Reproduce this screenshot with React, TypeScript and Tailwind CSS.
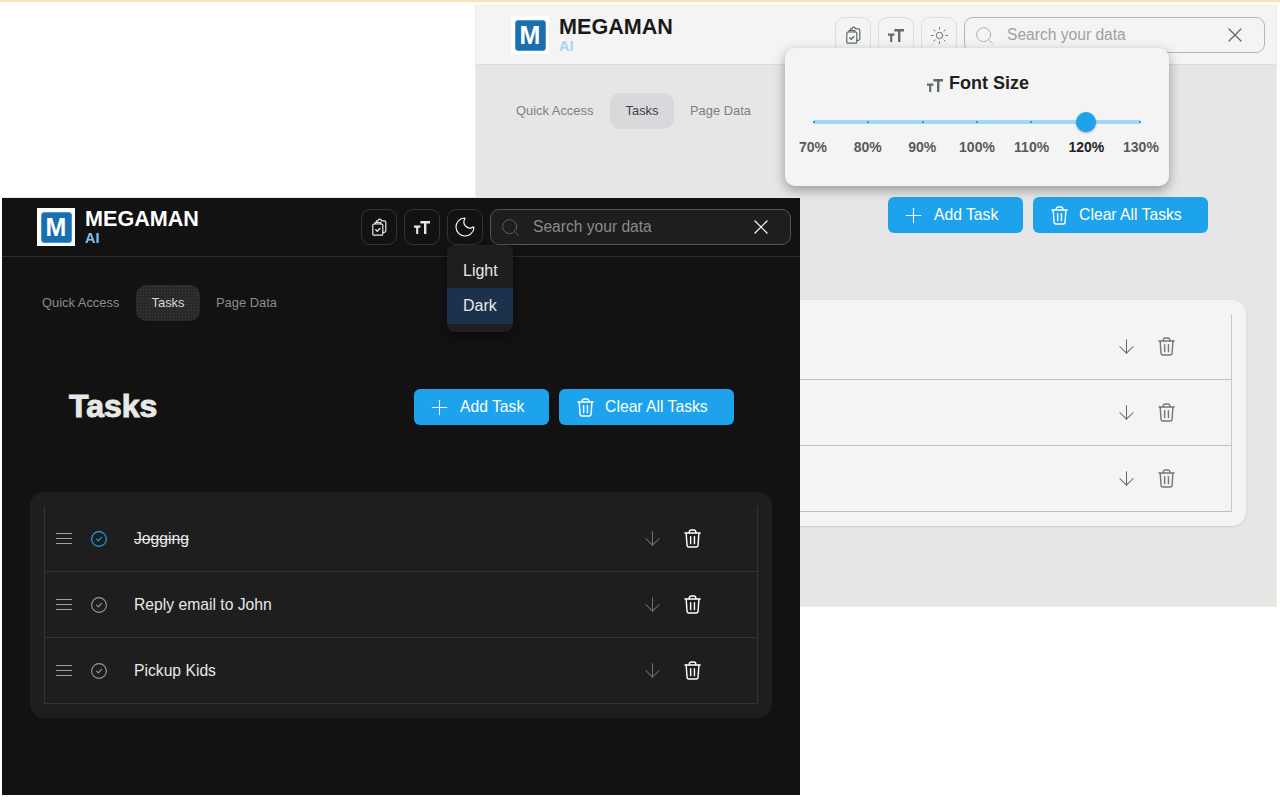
import React from "react";
import { ArrowDown, Moon, Plus, Search, Sun, X } from "lucide-react";

type Theme = {
  page: string; head: string; title: string; ai: string; iconBtn: string; iconInk: string; themeInk: string;
  search: string; searchIcon: string; placeholder: string; xInk: string; tab: string; tabActive: string;
  heading: string; card: string; list: string; row: string; handle: string; circle: string; task: string;
  arrow: string; trash: string;
};

const dark: Theme = {
  page: "bg-[#121212]",
  head: "border-[#2e2e2e] bg-[#121212]",
  title: "text-white",
  ai: "text-[#7cc4f5]",
  iconBtn: "border-[#333333]",
  iconInk: "text-[#e8e8e8]",
  themeInk: "text-white",
  search: "border-[#555555] bg-[#1e1e1e]",
  searchIcon: "text-[#666666]",
  placeholder: "text-[#8a8a8a]",
  xInk: "text-white",
  tab: "text-[#8c8c8c]",
  tabActive: "bg-[#292929] bg-[radial-gradient(#3d3d3d_0.6px,transparent_0.7px)] bg-[length:3px_3px] text-[#d8d8d8]",
  heading: "text-[#e8e8e8]",
  card: "bg-[#1e1e1e]",
  list: "border-[#333333]",
  row: "border-[#333333]",
  handle: "bg-[#a0a0a0]",
  circle: "text-[#9a9a9a]",
  task: "text-[#e8e8e8]",
  arrow: "text-[#6b7671]",
  trash: "text-white",
};

const light: Theme = {
  page: "bg-[#e6e6e6]",
  head: "border-[#dcdcdc] bg-[#f4f4f4]",
  title: "text-[#1a1a1a]",
  ai: "text-[#9fd8f4]",
  iconBtn: "border-[#dedede]",
  iconInk: "text-[#5f6b66]",
  themeInk: "text-[#5f6b66]",
  search: "border-[#b4b4b4] bg-[#f4f4f4]",
  searchIcon: "text-[#a6a6a6]",
  placeholder: "text-[#a0a0a0]",
  xInk: "text-[#666666]",
  tab: "text-[#808080]",
  tabActive: "bg-[#d9d9db] text-[#3a3f4a]",
  heading: "text-[#1a1a1a]",
  card: "bg-[#f4f4f4] shadow-[0_1px_2px_rgba(0,0,0,0.12)]",
  list: "border-[#c8c8c8]",
  row: "border-[#c0c0c0]",
  handle: "bg-[#777777]",
  circle: "text-[#777777]",
  task: "text-[#1a1a1a]",
  arrow: "text-[#5f6b66]",
  trash: "text-[#777777]",
};

const FontSizeIcon = ({ className }: { className?: string }) => (
  <svg viewBox="0 0 16 14" width="16" height="14" fill="none" stroke="currentColor" strokeWidth="2.4" className={className}>
    <path d="M6.4 2.2H16M11.2 2.2V14" />
    <path d="M0 6.6h6.4M3.2 6.6V14" strokeWidth="2.1" />
  </svg>
);

const TaskCopyIcon = ({ className }: { className?: string }) => (
  <svg viewBox="0 0 15 18" width="15" height="18" fill="none" stroke="currentColor" strokeWidth="1.2" strokeLinejoin="round" strokeLinecap="round" className={className}>
    <rect x="0.8" y="6" width="10" height="11.2" rx="1" />
    <path d="M3 6V4.6h1.4M4.4 4.6V2.8h1.8a1.6 1.6 0 0 1 3.2 0h2.8a1.6 1.6 0 0 1 1.6 1.6v8.4a1.6 1.6 0 0 1-1.6 1.6h-1.4" />
    <path d="M8.8 6V4.6H5" />
    <path d="M3.8 11.8l1.5 1.4 2.6-2.8" strokeWidth="1.4" />
  </svg>
);

const TrashIcon = ({ className, size = 20 }: { className?: string; size?: number }) => (
  <svg viewBox="0 0 18 20" width={size * 0.9} height={size} fill="none" stroke="currentColor" strokeWidth="1.5" strokeLinejoin="round" strokeLinecap="round" className={className}>
    <path d="M1 4.2h16" />
    <path d="M5.6 4V3a2 2 0 0 1 2-2h2.8a2 2 0 0 1 2 2v1" />
    <path d="M2.3 4.4l.9 12.8A2 2 0 0 0 5.2 19h7.6a2 2 0 0 0 2-1.8l.9-12.8" />
    <path d="M7 8v7.4M11 8v7.4" />
  </svg>
);

const CheckCircle = ({ className }: { className?: string }) => (
  <svg viewBox="0 0 16 16" width="16" height="16" fill="none" stroke="currentColor" strokeWidth="1.1" strokeLinecap="round" strokeLinejoin="round" className={className}>
    <circle cx="8" cy="8" r="7.4" />
    <path d="M5.6 8.2l1.7 1.7 3.2-3.6" />
  </svg>
);

const Logo = () => (
  <div className="flex h-[38px] w-[38px] shrink-0 items-center justify-center bg-white">
    <div className="flex h-[31px] w-[31px] items-center justify-center rounded-[3px] border-[1.5px] border-[#4f97c9] bg-[#1b6fae] text-[25px] font-bold leading-none text-white">M</div>
  </div>
);

function TaskRow({ t, label, done }: { t: Theme; label?: string; done?: boolean }) {
  return (
    <div className={`flex h-[66px] items-center border-b ${t.row}`}>
      <div className="ml-[11px] flex w-[16px] flex-col gap-[4px]">
        <span className={`h-px w-full ${t.handle}`} />
        <span className={`h-px w-full ${t.handle}`} />
        <span className={`h-px w-full ${t.handle}`} />
      </div>
      <CheckCircle className={`ml-[19px] ${done ? "text-[#1da3ec]" : t.circle}`} />
      <span className={`ml-[27px] flex-1 text-[15.7px] ${t.task} ${done ? "line-through" : ""}`}>{label}</span>
      <ArrowDown size={23} strokeWidth={1.05} className={`mr-[20px] ${t.arrow}`} />
      <TrashIcon className={`mr-[56px] ${t.trash}`} size={19} />
    </div>
  );
}

function Screen({ t, isDark }: { t: Theme; isDark: boolean }) {
  return (
    <div className={`flex h-[600px] w-[800px] flex-col ${t.page}`}>
      <header className={`flex h-[59px] shrink-0 items-center border-b pl-[35px] pr-[11px] ${t.head}`}>
        <Logo />
        <div className="ml-[10px] -mt-[2px] flex flex-col">
          <span className={`text-[21.6px] font-bold leading-[24px] ${t.title}`}>MEGAMAN</span>
          <span className={`text-[14.4px] font-bold leading-[15px] ${t.ai}`}>AI</span>
        </div>
        <div className="ml-auto flex items-center gap-[7px]">
          <button className={`flex h-9 w-9 items-center justify-center rounded-[9px] border ${t.iconBtn} ${t.iconInk}`}><TaskCopyIcon /></button>
          <button className={`flex h-9 w-9 items-center justify-center rounded-[9px] border ${t.iconBtn} ${t.iconInk}`}><FontSizeIcon /></button>
          <button className={`flex h-9 w-9 items-center justify-center rounded-[9px] border ${t.iconBtn} ${t.themeInk}`}>
            {isDark ? <Moon size={24} strokeWidth={1.1} /> : <Sun size={19} strokeWidth={1.2} />}
          </button>
          <div className={`flex h-9 w-[301px] items-center rounded-[9px] border pl-[9px] pr-[17px] ${t.search}`}>
            <Search size={21} strokeWidth={1} className={t.searchIcon} />
            <span className={`ml-[12px] flex-1 text-[15.6px] ${t.placeholder}`}>Search your data</span>
            <X size={24} strokeWidth={1.2} className={t.xInk} />
          </div>
        </div>
      </header>

      <nav className="mt-[28px] flex h-9 pl-6 text-[12.9px]">
        <span className={`flex w-[110px] items-center pl-4 ${t.tab}`}>Quick Access</span>
        <span className={`flex w-[64px] items-center justify-center rounded-[10px] ${t.tabActive}`}>Tasks</span>
        <span className={`flex items-center px-4 ${t.tab}`}>Page Data</span>
      </nav>

      <div className="mt-[68px] flex h-9 items-center justify-between pl-[67px] pr-[68px]">
        {isDark ? (
          <h1 className={`-mt-[3px] text-[32px] font-bold [-webkit-text-stroke:1px_currentColor] ${t.heading}`}>Tasks</h1>
        ) : (
          <span />
        )}
        <div className="flex gap-[10px] text-[15.7px] text-white">
          <button className="flex h-9 w-[135px] items-center rounded-[6px] bg-[#1da3ec] pl-[13px]">
            <Plus size={25} strokeWidth={1} />
            <span className="ml-[8px]">Add Task</span>
          </button>
          <button className="flex h-9 w-[175px] items-center rounded-[6px] bg-[#1da3ec] pl-[18px]">
            <TrashIcon size={19} />
            <span className="ml-[11px]">Clear All Tasks</span>
          </button>
        </div>
      </div>

      <section className={`ml-[28px] mt-[67px] w-[742px] rounded-[14px] p-[14px] ${t.card}`}>
        <div className={`border-x ${t.list}`}>
          <TaskRow t={t} label={isDark ? "Jogging" : undefined} done />
          <TaskRow t={t} label={isDark ? "Reply email to John" : undefined} />
          <TaskRow t={t} label={isDark ? "Pickup Kids" : undefined} />
        </div>
      </section>
    </div>
  );
}

const levels = ["70%", "80%", "90%", "100%", "110%", "120%", "130%"];

export default function App() {
  return (
    <div className="relative h-[800px] w-[1280px] overflow-hidden bg-white font-['Liberation_Sans',Arial,sans-serif]">
      <div className="h-[2px] w-full bg-[#fbe3bd]" />

      <div className="absolute left-[475px] top-[5px] border border-[#f7e8d8]">
        <Screen t={light} isDark={false} />
        <div className="absolute left-[309px] top-[42px] h-[138px] w-[384px] rounded-[10px] bg-[#f4f4f4] shadow-[0_4px_12px_rgba(0,0,0,0.35)]">
          <div className="mt-[24px] flex items-center justify-center gap-[6px] text-[18px] font-bold leading-[22px] text-[#1f1f1f]">
            <FontSizeIcon className="ml-[2px] mt-[3px] text-[#5f6b66]" />
            <span>Font Size</span>
          </div>
          <div className="relative mx-[28px] mt-[18px] flex h-[20px] items-center justify-between rounded-full">
            <div className="absolute inset-x-0 top-[8px] h-[4px] rounded-full bg-[#9fd8f4]" />
            {levels.map((l) => (
              <span key={l} className="relative h-[2px] w-[2px] bg-[#1da3ec]" />
            ))}
            <span className="absolute left-[263px] top-0 h-5 w-5 rounded-full bg-[#1da3ec] shadow-[0_1px_2px_rgba(0,0,0,0.35)]" />
          </div>
          <div className="mx-[28px] mt-[5px] flex justify-between text-[14px] font-bold leading-[20px] text-[#5a5a5a]">
            {levels.map((l) => (
              <span key={l} className={`flex w-0 justify-center ${l === "120%" ? "text-[#222222]" : ""}`}>{l}</span>
            ))}
          </div>
        </div>
      </div>

      <div className="absolute left-[2px] top-[197px] h-[598px] w-[798px] overflow-hidden border-t border-[#f0e4d6]">
        <Screen t={dark} isDark />
        <div className="absolute left-[445px] top-[47px] w-[66px] rounded-[8px] bg-[#1e1e1e] pb-[8px] pt-[7px] text-[16px] text-[#e8e8e8] shadow-[0_4px_10px_rgba(0,0,0,0.4)]">
          <div className="flex h-9 items-center pl-4 pt-[2px]">Light</div>
          <div className="flex h-9 items-center bg-[#1c324c] pl-4">Dark</div>
        </div>
      </div>
    </div>
  );
}
